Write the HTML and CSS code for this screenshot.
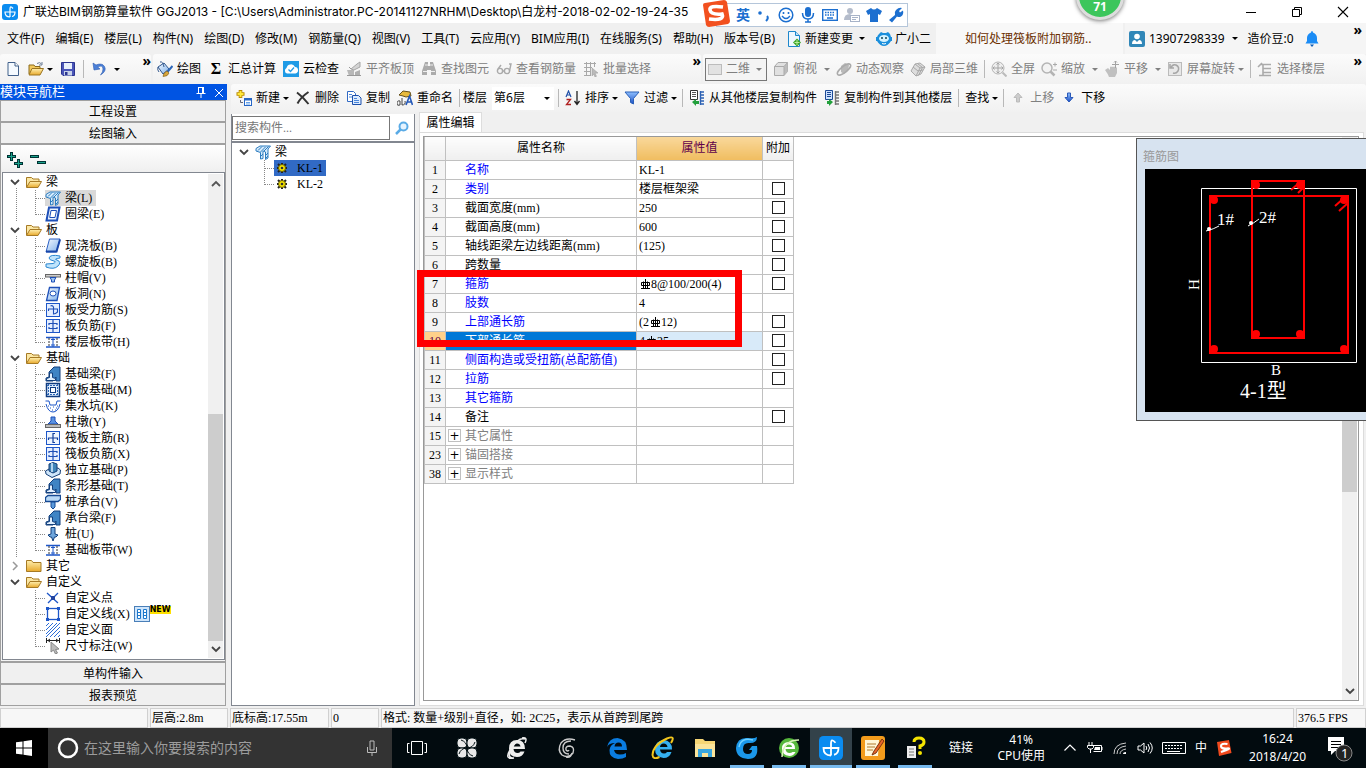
FILE: index.html
```html
<!DOCTYPE html>
<html lang="zh-CN">
<head>
<meta charset="utf-8">
<title>广联达BIM钢筋算量软件 GGJ2013</title>
<link rel="stylesheet" href="styles.css">
</head>
<body>
<svg class="defs" aria-hidden="true">
  <defs>
    <linearGradient id="gold" x1="0" y1="0" x2="0" y2="1"><stop offset="0" stop-color="#fff0b0"/><stop offset="1" stop-color="#e8a92c"/></linearGradient>
    <linearGradient id="sky" x1="0" y1="0" x2="1" y2="1"><stop offset="0" stop-color="#f4faff"/><stop offset="1" stop-color="#7fb0ea"/></linearGradient>
    <linearGradient id="royal" x1="0" y1="0" x2="0" y2="1"><stop offset="0" stop-color="#8fc0ff"/><stop offset="1" stop-color="#1b4fc4"/></linearGradient>
  </defs>
  <symbol id="logo" viewBox="0 0 16 16"><rect width="16" height="16" rx="3" fill="#0b8cf0"/><path d="M11 4.500Q8 1 8 5v8M8 13Q3 13 3 8h10q0 4-3 4.500" fill="none" stroke="#fff" stroke-width="1.200"/></symbol>
  <symbol id="doc" viewBox="0 0 16 16"><path d="M3 1.500h7l3.500 3.500v9.500H3z" fill="#f5faff" stroke="#41608a"/><path d="M10 1.500V5h3.500" fill="#fff" stroke="#41608a"/></symbol>
  <symbol id="open" viewBox="0 0 16 16"><path d="M1 13V4h5l1 1.500h5V8" fill="#f2c95c" stroke="#8a6a1c"/><path d="M1 14L4 7.500h11.500L12 14z" fill="url(#gold)" stroke="#9b7420"/><path d="M9 2.500q3-2 4.500.5M14 1v3h-3" fill="none" stroke="#6a7d95"/></symbol>
  <symbol id="fopen" viewBox="0 0 16 16"><path d="M.5 13V3.500h5L7 5h6v3" fill="#fbe7a4" stroke="#a67a25"/><path d="M.5 13.500L4 7.500h11.500L12 13.500z" fill="url(#gold)" stroke="#a67a25"/></symbol>
  <symbol id="save" viewBox="0 0 16 16"><path d="M1.500 1.500h13v13H3L1.500 13z" fill="#4a55b8" stroke="#2b3490"/><rect x="4" y="2" width="8" height="6" fill="#e8f0fb"/><rect x="4" y="10" width="8" height="4.500" fill="#c7d2e8"/><rect x="5" y="11" width="2.500" height="3" fill="#2b3490"/></symbol>
  <symbol id="undo" viewBox="0 0 16 16"><path d="M2 2l1 7 6-1-2.300-2q5-2.500 5.300 2 .2 3-2.500 6Q16 10 13.500 5.500 11 1.500 5 4z" fill="#4b80d8" stroke="#2b5bb0" stroke-width=".6"/></symbol>
  <symbol id="paint" viewBox="0 0 16 16"><path d="M1 6l6-4 5 6-6 5z" fill="url(#sky)" stroke="#31568c"/><path d="M3 1q3-1 4 5" fill="none" stroke="#31568c"/><path d="M1 6q-1 3 1 5" stroke="#31568c" fill="none"/><path d="M15.500 5l-6 7" stroke="#2c66b8" stroke-width="2"/><path d="M10 10q-4 2-4 5.500 5 0 6-3.500z" fill="#d8a63c" stroke="#7a5a18" stroke-width=".6"/></symbol>
  <symbol id="cloud" viewBox="0 0 16 16"><rect width="16" height="16" fill="#1f9be6"/><path d="M4 12.500a3 3 0 01-.5-5.500A4.500 4.500 0 0112 6a3.300 3.300 0 01.5 6.500z" fill="#fff"/><path d="M5.500 8.500l2 2 3.500-4" fill="none" stroke="#1f9be6" stroke-width="1.300"/></symbol>
  <symbol id="slab" viewBox="0 0 16 16"><path d="M1 9h7v6H3z" fill="#b8b8b8"/><path d="M5 8l6-5 3-2v5L8 9z" fill="#d4d4d4" stroke="#a6a6a6"/><path d="M9 15v-4l5-2v6z" fill="#b0b0b0"/><path d="M1 14.500h14M3 6l2 2" stroke="#999"/></symbol>
  <symbol id="bino" viewBox="0 0 16 16"><path d="M4 1h3v4h2V1h3l3 9v4h-5v-5H6v5H1v-4z" fill="#ababab"/><path d="M2 10.500h4M10 10.500h4M4 4h3M9 4h3" stroke="#eee"/></symbol>
  <symbol id="glasses" viewBox="0 0 16 16"><g fill="none" stroke="#aaa" stroke-width="1.400"><circle cx="4" cy="10" r="2.600"/><circle cx="11" cy="10" r="2.600"/><path d="M6.500 10h2M2 8l3-4M13.500 10l1.500-7-2 0"/></g></symbol>
  <symbol id="batch" viewBox="0 0 16 16"><path d="M1 2.500h12M1 6.500h8M1 10.500h6M1 14.500h6M3.500 1v14M7.500 1v14M11.500 1v5" stroke="#a8a8a8" fill="none"/><path d="M9 7l6 5-3 .3 1.500 3-1.500.7-1.400-3L9 15z" fill="#bbb" stroke="#999" stroke-width=".5"/></symbol>
  <symbol id="plane" viewBox="0 0 16 16"><rect x="1.500" y="3.500" width="13" height="10" fill="#e2e2e2" stroke="#bcbcbc"/></symbol>
  <symbol id="cube" viewBox="0 0 16 16"><path d="M1.500 5.500L5 1.500h9.500v9L11 14.500H1.500z" fill="#e0e0e0" stroke="#aaa"/><path d="M11 5.500l3.500-4v9L11 14.500z" fill="#bcbcbc"/><path d="M1.500 5.500H11v9M11 5.500l3.500-4" fill="none" stroke="#aaa"/></symbol>
  <symbol id="orbit" viewBox="0 0 16 16"><path d="M5 11V5l4-3 4 2-1 6-4 3z" fill="#b9b9b9"/><ellipse cx="8" cy="8.500" rx="8" ry="3" fill="none" stroke="#aaa" stroke-width="1.500" transform="rotate(-38 8 8.500)"/></symbol>
  <symbol id="local" viewBox="0 0 16 16"><path d="M1 10l4-7 5-1 5 4-4 7-5 2z" fill="#ddd" stroke="#aaa"/><path d="M5 3l5 4 5-1M10 7l-4 8M3 6l5 4 5-1M7.500 2.500l5 4-4 8" fill="none" stroke="#a8a8a8"/></symbol>
  <symbol id="full" viewBox="0 0 16 16"><circle cx="7" cy="7" r="6" fill="#eee" stroke="#b4b4b4"/><path d="M7 2v10M2 7h10M5.500 3.500L7 2l1.500 1.500M5.500 10.500L7 12l1.500-1.500M3.500 5.500L2 7l1.500 1.500M10.500 5.500L12 7l-1.500 1.500" fill="none" stroke="#a4a4a4"/><path d="M11.500 11.500l4 4" stroke="#bbb" stroke-width="2"/></symbol>
  <symbol id="zoomer" viewBox="0 0 16 16"><circle cx="6" cy="7" r="5" fill="#f3f3f3" stroke="#b4b4b4" stroke-width="1.500"/><path d="M9.500 10.500l4 4" stroke="#b4b4b4" stroke-width="2.500"/><path d="M12 3.500h4M14 1.500v4M12 9h4" stroke="#aaa"/></symbol>
  <symbol id="pan" viewBox="0 0 16 16"><path d="M1 9l3-2 2 2V6q1-1 2 0 1-1 2 0 1-1 2 0l1 1v5l-2 4H5q-1-3-4-7z" fill="#c0c0c0"/><path d="M11.500 0v7M8 3.500h7M10 1.500L11.500 0 13 1.500" stroke="#a2a2a2" fill="none"/></symbol>
  <symbol id="spin" viewBox="0 0 16 16"><rect x="1.500" y="1.500" width="13" height="13" fill="#e8e8e8" stroke="#bbb"/><path d="M4 7q1-4 5-3 4 2 2 6-2 3-5 2M3 3v4h4" fill="none" stroke="#a5a5a5" stroke-width="1.500"/></symbol>
  <symbol id="floors" viewBox="0 0 16 16"><path d="M4 3.500h10M6 7.500h8M6 11.500h8M2 14.500h12M1 6l4-4M6 4v10" fill="none" stroke="#aaa" stroke-width="1.600"/></symbol>
  <symbol id="newc" viewBox="0 0 16 16"><path d="M4.500 0v8M.5 4h8" stroke="#b98a00" stroke-width="3.600"/><path d="M4.500 1v6M1.500 4h6" stroke="#ffe83a" stroke-width="2"/><rect x="8.500" y="8.500" width="7" height="7" fill="#fff" stroke="#2666c6"/><path d="M8 9.500h8" stroke="#2666c6" stroke-width="2"/><path d="M10 12.500h4M10 14h4" stroke="#68a2e8"/><path d="M4.500 10v2.500H7" stroke="#667" fill="none"/></symbol>
  <symbol id="del" viewBox="0 0 16 16"><path d="M2 2.500Q8 7 13.500 14M13.500 2Q6 7 2.500 13.500" fill="none" stroke="#333" stroke-width="2"/></symbol>
  <symbol id="copy" viewBox="0 0 16 16"><path d="M1.500 1.500h6l2 2v8h-8z" fill="#fff" stroke="#316ac5"/><path d="M6.500 5.500h6l2.500 2.500v6.500H6.500z" fill="#dcebff" stroke="#1c4faa"/><path d="M3 4.500h3M3 7h3M8 8.500h3M8 10.500h5M8 12.500h5" stroke="#4a86da"/></symbol>
  <symbol id="ren" viewBox="0 0 16 16"><path d="M2 5l4-4 7 1 1 4-5 1-3-1z" fill="#e6b93c" stroke="#65501c"/><path d="M0 14q0-4 3-3v4q-3 1-3-1zM5 8v7q4 0 3-4" fill="none" stroke="#444"/><path d="M9 15l3.500-9 3 9M10 12h5" fill="none" stroke="#2458b8" stroke-width="1.600"/></symbol>
  <symbol id="sort" viewBox="0 0 16 16"><path d="M1 7l2.500-6L6 7M2 5h3" fill="none" stroke="#2050a8" stroke-width="1.200"/><path d="M1.500 9.500h4l-4 5H6" fill="none" stroke="#b02020" stroke-width="1.300"/><path d="M12 1v13M9.500 11l2.500 3.500 2.500-3.500" fill="none" stroke="#222" stroke-width="1.300"/></symbol>
  <symbol id="filter" viewBox="0 0 16 16"><path d="M1 2h14L9.500 8.500V14l-3-1.500V8.500z" fill="url(#royal)" stroke="#2a60b8"/></symbol>
  <symbol id="from" viewBox="0 0 16 16"><path d="M1.500.5h7v9h-7z" fill="#fff" stroke="#333"/><path d="M3 2.500h4M3 4.500h4M3 6.500h4" stroke="#555"/><path d="M11.500 1v14M11 2h4M11 5h4M11 8h4M11 11h4M11 14h4" stroke="#2d62b4" stroke-width="1.400"/><path d="M3 12l4-3v2h3v3H7v2z" fill="#23a03c"/></symbol>
  <symbol id="to" viewBox="0 0 16 16"><path d="M1.500.5h7v9h-7z" fill="#cfe2ff" stroke="#1d4a96"/><path d="M3 2.500h4M3 4.500h4M3 6.500h4" stroke="#1d4a96"/><path d="M11.500 1v14M11 2h4M11 5h4M11 8h4M11 11h4M11 14h4" stroke="#777" stroke-width="1.400"/><path d="M9 12l-4-3v2H3v3h2v2z" fill="#23a03c"/></symbol>
  <symbol id="up" viewBox="0 0 16 16"><path d="M8 3l4 4.500H9.500V12h-3V7.500H4z" fill="#ccc" stroke="#bbb"/></symbol>
  <symbol id="down" viewBox="0 0 16 16"><path d="M8 12l4-4.500H9.500V3h-3v4.500H4z" fill="url(#royal)" stroke="#2a58b8"/></symbol>
  <symbol id="change" viewBox="0 0 16 16"><path d="M2.500.5h7l4 4v11h-11z" fill="#eef8ff" stroke="#1d87cc"/><path d="M9.500.5v4h4" fill="#bfe2f8" stroke="#1d87cc"/><path d="M11 7.500l4 4-4 4-4-4z" fill="#3aa326"/><path d="M11 9v5M8.500 11.500h5" stroke="#b8f09a"/></symbol>
  <symbol id="mascot" viewBox="0 0 16 16"><path d="M3 3l2-2 2 1h3l2-1 2 2q2 4 1 7-3 5-7 5T1 10Q0 6 3 3zM0 6h2v4H0zM14 6h2v4h-2z" fill="#1b8fdc"/><ellipse cx="8" cy="7.500" rx="5" ry="3.500" fill="#d4f2ff"/><circle cx="6" cy="7" r="1" fill="#145"/><circle cx="10" cy="7" r="1" fill="#145"/><path d="M6 12.500q2 1 4 0" stroke="#fff" fill="none"/></symbol>
  <symbol id="user" viewBox="0 0 16 16"><rect width="16" height="16" rx="2" fill="#3187b8"/><circle cx="8" cy="5.500" r="2.800" fill="#fff"/><path d="M3 13q0-4 3-4l2 2 2-2q3 0 3 4z" fill="#fff"/></symbol>
  <symbol id="bell" viewBox="0 0 16 16"><path d="M8 0q1 0 1 1.500Q13 3 13 7v3l1.500 2.500h-13L3 10V7q0-4 4-5.500Q7 0 8 0z" fill="#1b8cf5"/><path d="M6 13.500h4L8 16z" fill="#0b5cb8"/></symbol>
  <symbol id="folder" viewBox="0 0 16 16"><path d="M.5 13.500v-11h5l1.500 2h8v9z" fill="url(#gold)" stroke="#a67a25"/></symbol>
  <symbol id="chev-d" viewBox="0 0 10 10"><path d="M1 3l4 4 4-4" fill="none" stroke="#444" stroke-width="1.800"/></symbol>
  <symbol id="chev-r" viewBox="0 0 10 10"><path d="M3 1l4 4-4 4" fill="none" stroke="#999" stroke-width="1.500"/></symbol>
  <symbol id="chev-u" viewBox="0 0 10 10"><path d="M1 7l4-4 4 4" fill="none" stroke="#555" stroke-width="1.800"/></symbol>
  <symbol id="beam" viewBox="0 0 16 16"><path d="M1 4.500L5 2h10.500L13 5v9l-2.500 1.500V8L8 7v7.500L5.500 15V8.500L1 7z" fill="#d7ecfc" stroke="#2d7cc0"/><path d="M3 6.500l4-4M5.500 8l5-5M9 7l4.500-4.500M6 12l2-2M11 11l2-2M11 14l2-2" stroke="#2d7cc0"/></symbol>
  <symbol id="ring" viewBox="0 0 16 16"><path d="M4 1.500h10.500L12 14.500H1.500z" fill="#eaf3ff" stroke="#1d4fb8" stroke-width="2"/><path d="M6 4.500h5.500L10 11.500H4.700z" fill="#fff" stroke="#1d4fb8"/></symbol>
  <symbol id="slabb" viewBox="0 0 16 16"><path d="M4.500 1h10.500L11.500 14H1z" fill="url(#sky)" stroke="#2a5fc4"/><path d="M1 13.500h10.500L15 1.500" fill="none" stroke="#1846a8" stroke-width="2"/></symbol>
  <symbol id="spiral" viewBox="0 0 16 16"><path d="M15 2Q5 0 4 4q0 2 5 3 3 1-1 2.500L1 10v3q8 3 12-1 4-4-1-6-4-1 3-2z" fill="#bfe4fc" stroke="#2a86d0"/></symbol>
  <symbol id="cap" viewBox="0 0 16 16"><rect x=".5" y="4.500" width="15" height="2.500" fill="#ccc" stroke="#666"/><path d="M5 7.500h6L9.500 10v2h-3v-2z" fill="#9cc4f0" stroke="#1d4fb8"/></symbol>
  <symbol id="hole" viewBox="0 0 16 16"><path d="M4.500 1.500h10L12 14.500H1.500z" fill="url(#sky)" stroke="#1d4fb8" stroke-width="1.300"/><ellipse cx="8" cy="7.500" rx="3" ry="2.500" fill="#fff" stroke="#1d4fb8"/></symbol>
  <symbol id="force" viewBox="0 0 16 16"><rect x="1.500" y="1.500" width="13" height="13" fill="#e4eeff" stroke="#1d56c8"/><path d="M3.500 9V7h9v3q-2 2-4 2V5q-1-2-3-1" fill="none" stroke="#1d4fb8" stroke-width="1.100"/></symbol>
  <symbol id="neg" viewBox="0 0 16 16"><rect x="1.500" y="1.500" width="13" height="13" fill="#e4eeff" stroke="#1d56c8"/><path d="M8 2v12M4 5.500h8M4 10.500h8M4 5v2M12 5v2M4 9v2M12 9v2" stroke="#1d4fb8" stroke-width="1.200"/></symbol>
  <symbol id="band" viewBox="0 0 16 16"><path d="M1 3.500h14M1 13h14" stroke="#1d56c8" stroke-width="1.600"/><path d="M8 3v10M6 5.500h4M6 11h4" stroke="#1d56c8"/><path d="M4 4v8M12 4v8" stroke="#333" stroke-dasharray="2 1"/></symbol>
  <symbol id="fbeam" viewBox="0 0 16 16"><path d="M1 15v-3l3-1V6l5-5h6v14h-4v-4L8 15z" fill="#3f84c4" stroke="#123f7c"/><path d="M1.500 14.500v-2l3-1V7h3v4.500l3 1v2z" fill="#e2f0ff" stroke="#123f7c"/></symbol>
  <symbol id="raft" viewBox="0 0 16 16"><rect x="1.500" y="1.500" width="13" height="13" fill="#e2efff" stroke="#103c80" stroke-width="1.500"/><rect x="5.500" y="5.500" width="5" height="5" fill="#fff" stroke="#103c80"/><path d="M3.500 2v12M12.500 2v12M2 3.500h12M2 12.500h12" stroke="#2a65b4" stroke-dasharray="2 1"/></symbol>
  <symbol id="pit" viewBox="0 0 16 16"><path d="M.5 3H4l1 4h6l1-4h3.500M1 6q2 8 7 8t7-8" fill="none" stroke="#1d56c8"/><path d="M3 8h1M5 10h1M8 9h1M11 10h1M7 12h1M10 12h1M12 8h1" stroke="#1d56c8"/></symbol>
  <symbol id="pier" viewBox="0 0 16 16"><path d="M6 3h4v4l3 3H3l3-3z" fill="#5a92e0" stroke="#1d4fb8"/><rect x=".5" y="10.500" width="15" height="3" fill="#bbb" stroke="#666"/></symbol>
  <symbol id="mainbar" viewBox="0 0 16 16"><rect x="1.500" y="1.500" width="13" height="13" fill="#eef5ff" stroke="#1d56c8"/><path d="M3.500 10V8h9v2M10 3.500H8v9h2" stroke="#123f9c" stroke-width="1.200" fill="none"/></symbol>
  <symbol id="found" viewBox="0 0 16 16"><path d="M.5 9L4 7l9-1 2.500 2-.5 4-8 3.500L1 12z" fill="#cfe6fa" stroke="#143f78"/><path d="M4 2l4-1.500 4 1.500v7l-4 2-4-2z" fill="#3f84b8" stroke="#143f78"/><path d="M7 1v9" stroke="#d8edff" stroke-width="1.500"/></symbol>
  <symbol id="pilecap" viewBox="0 0 16 16"><path d="M.5 3.500L3 1.500h12.500v4L13 7.500H.5z" fill="#b9d9f6" stroke="#164a94" stroke-width="1.300"/><path d="M6 8h4v5l-2 2-2-2z" fill="#5c9bdc" stroke="#164a94"/></symbol>
  <symbol id="pile" viewBox="0 0 16 16"><path d="M6 1.500h4V8l3 1-2 2H9.500L8 15l-1.500-4H5L3 9l3-1z" fill="#6ea5dc" stroke="#123f7c"/></symbol>
  <symbol id="pt" viewBox="0 0 16 16"><path d="M2 3l11 10M13 3L3 13" stroke="#1d56c8" stroke-width="1.300"/><rect x="6" y="6" width="4" height="4" fill="#2244a0"/></symbol>
  <symbol id="line" viewBox="0 0 16 16"><rect x="2.500" y="2.500" width="11" height="11" fill="#fff" stroke="#1d56c8" stroke-width="1.300"/><path d="M1 1h3v3H1zM12 1h3v3h-3zM1 12h3v3H1zM12 12h3v3h-3z" fill="#1d56c8"/></symbol>
  <symbol id="area" viewBox="0 0 16 16"><path d="M1 4l3-3M1 8l7-7M1 12L12 1M1 15L15 1M5 15L15 5M9 15l6-6M13 15l2-2" stroke="#2a6cd8"/></symbol>
  <symbol id="dim" viewBox="0 0 16 16"><path d="M1.500 0v5M14.500 0v5M2 2.500h12M5 1L3 2.500 5 4M11 1l2 1.500L11 4" stroke="#222" fill="none"/><path d="M6 4l8 7-3.500.5 2 3.500-2 1-2-4L6 14z" fill="#bbb" stroke="#888"/></symbol>
  <symbol id="grid" viewBox="0 0 16 16"><rect x=".5" y=".5" width="15" height="15" fill="#cfe5fb" stroke="#4a7fb8"/><path d="M3.500 3.500h3v9h-3zM9.500 3.500h3v9h-3zM3.500 6.500h3M3.500 9.500h3M9.500 6.500h3M9.500 9.500h3" fill="#fff" stroke="#1d78cc"/></symbol>
  <symbol id="gear" viewBox="0 0 16 16"><path d="M8 3v10M3 8h10M4 4l8 8M12 4l-8 8" stroke="#222" stroke-width="2"/><circle cx="8" cy="8" r="3.500" fill="#f5e400" stroke="#665c00"/><circle cx="8" cy="8" r="1.300" fill="#333"/></symbol>
  <symbol id="rebar" viewBox="0 0 12 12"><path d="M6.500 1v9.500M4.500 3.500v7M8.500 3.500v7M2.500 4.500h8v3h-8zM2 10.500h9" fill="none" stroke="#000"/></symbol>
</svg>

<header class="titlebar">
  <svg class="ic"><use href="#logo"/></svg>
  <h1>广联达BIM钢筋算量软件 GGJ2013 - [C:\Users\Administrator.PC-20141127NRHM\Desktop\白龙村-2018-02-02-19-24-35</h1>
  <div class="winbtns">
    <button aria-label="最小化"><svg class="ic" viewBox="0 0 16 16"><path d="M3 8.500h10" stroke="#000"/></svg></button>
    <button aria-label="还原"><svg class="ic" viewBox="0 0 16 16"><path d="M3.500 5.500h7v7h-7zM5.500 5.500v-2h7v7h-2" fill="none" stroke="#000"/></svg></button>
    <button aria-label="关闭"><svg class="ic" viewBox="0 0 16 16"><path d="M3 3l10 10M13 3L3 13" stroke="#000" stroke-width="1.100"/></svg></button>
  </div>
</header>

<nav class="menubar">
  <div class="menus">
    <button>文件(F)</button><button>编辑(E)</button><button>楼层(L)</button><button>构件(N)</button><button>绘图(D)</button><button>修改(M)</button><button>钢筋量(Q)</button><button>视图(V)</button><button>工具(T)</button><button>云应用(Y)</button><button>BIM应用(I)</button><button>在线服务(S)</button><button>帮助(H)</button><button>版本号(B)</button>
    <button class="tb"><svg class="ic"><use href="#change"/></svg>新建变更<i class="caret far"></i></button>
    <button class="tb"><svg class="ic"><use href="#mascot"/></svg>广小二</button>
  </div>
  <a class="tip" href="#help">如何处理筏板附加钢筋..</a>
  <div class="account">
    <button class="tb"><svg class="ic"><use href="#user"/></svg>13907298339<i class="caret far"></i></button>
    <span>造价豆:0</span>
    <button aria-label="通知"><svg class="ic"><use href="#bell"/></svg></button>
    <button class="more" aria-label="更多">»</button>
  </div>
</nav>

<div class="toolrow">
  <div class="group files">
    <button aria-label="新建"><svg class="ic"><use href="#doc"/></svg></button>
    <button class="tb" aria-label="打开"><svg class="ic"><use href="#open"/></svg><i class="caret"></i></button>
    <button aria-label="保存"><svg class="ic"><use href="#save"/></svg></button>
    <i class="sep"></i>
    <button class="tb" aria-label="撤销"><svg class="ic"><use href="#undo"/></svg><i class="caret far"></i></button>
    <button class="more" aria-label="更多">»</button>
  </div>
  <div class="group draw">
    <button class="tb"><svg class="ic"><use href="#paint"/></svg>绘图</button>
    <button class="tb"><b class="sigma">Σ</b>汇总计算</button>
    <button class="tb"><svg class="ic"><use href="#cloud"/></svg>云检查</button>
    <button class="tb off"><svg class="ic"><use href="#slab"/></svg>平齐板顶</button>
    <button class="tb off"><svg class="ic"><use href="#bino"/></svg>查找图元</button>
    <button class="tb off"><svg class="ic"><use href="#glasses"/></svg>查看钢筋量</button>
    <button class="tb off"><svg class="ic"><use href="#batch"/></svg>批量选择</button>
    <button class="more" aria-label="更多">»</button>
  </div>
  <div class="group view">
    <label class="combo off"><svg class="ic"><use href="#plane"/></svg><select aria-label="视图"><option>二维</option></select><i class="caret"></i></label>
    <button class="tb off"><svg class="ic"><use href="#cube"/></svg>俯视<i class="caret far"></i></button>
    <button class="tb off"><svg class="ic"><use href="#orbit"/></svg>动态观察</button>
    <button class="tb off"><svg class="ic"><use href="#local"/></svg>局部三维</button>
    <i class="sep"></i>
    <button class="tb off"><svg class="ic"><use href="#full"/></svg>全屏</button>
    <button class="tb off"><svg class="ic"><use href="#zoomer"/></svg>缩放<i class="caret far"></i></button>
    <button class="tb off"><svg class="ic"><use href="#pan"/></svg>平移<i class="caret far"></i></button>
    <button class="tb off"><svg class="ic"><use href="#spin"/></svg>屏幕旋转<i class="caret"></i></button>
    <i class="sep"></i>
    <button class="tb off"><svg class="ic"><use href="#floors"/></svg>选择楼层</button>
    <button class="more" aria-label="更多">»</button>
  </div>
</div>

<div class="workspace">
  <aside class="module song">
    <div class="caption"><span>模块导航栏</span>
      <button aria-label="固定"><svg class="ic" viewBox="0 0 16 16"><path d="M5.500 3v6M10.500 3v6M5 3.500h6M3.500 9.500h9M8 10v4M9.500 3v6" stroke="#fff" fill="none"/></svg></button>
      <button aria-label="关闭"><svg class="ic" viewBox="0 0 16 16"><path d="M4 5l8 8M12 5l-8 8" stroke="#fff"/></svg></button>
    </div>
    <button class="section">工程设置</button>
    <button class="section">绘图输入</button>
    <div class="treebox">
      <div class="expand">
        <button aria-label="全部展开"><svg class="ic" viewBox="0 0 16 16"><path d="M4.500 0v9M0 4.500h9M11.500 7v9M7 11.500h9" stroke="#033" stroke-width="3"/><path d="M4.500 1v7M1 4.500h7M11.500 8v7M8 11.500h7" stroke="#19a28c"/></svg></button>
        <button aria-label="全部折叠"><svg class="ic" viewBox="0 0 16 16"><path d="M0 4.500h9M7 10.500h9" stroke="#033" stroke-width="3"/><path d="M1 4.500h7M8 10.500h7" stroke="#19a28c"/></svg></button>
      </div>
      <div class="treepane">
        <ul class="tree">
          <li class="branch"><div class="node"><svg class="tw"><use href="#chev-d"/></svg><svg class="ic"><use href="#fopen"/></svg>梁</div>
            <ul>
              <li class="on"><span><svg class="ic"><use href="#beam"/></svg>梁(L)</span></li>
              <li><span><svg class="ic"><use href="#ring"/></svg>圈梁(E)</span></li>
            </ul></li>
          <li class="branch"><div class="node"><svg class="tw"><use href="#chev-d"/></svg><svg class="ic"><use href="#fopen"/></svg>板</div>
            <ul>
              <li><span><svg class="ic"><use href="#slabb"/></svg>现浇板(B)</span></li>
              <li><span><svg class="ic"><use href="#spiral"/></svg>螺旋板(B)</span></li>
              <li><span><svg class="ic"><use href="#cap"/></svg>柱帽(V)</span></li>
              <li><span><svg class="ic"><use href="#hole"/></svg>板洞(N)</span></li>
              <li><span><svg class="ic"><use href="#force"/></svg>板受力筋(S)</span></li>
              <li><span><svg class="ic"><use href="#neg"/></svg>板负筋(F)</span></li>
              <li><span><svg class="ic"><use href="#band"/></svg>楼层板带(H)</span></li>
            </ul></li>
          <li class="branch"><div class="node"><svg class="tw"><use href="#chev-d"/></svg><svg class="ic"><use href="#fopen"/></svg>基础</div>
            <ul>
              <li><span><svg class="ic"><use href="#fbeam"/></svg>基础梁(F)</span></li>
              <li><span><svg class="ic"><use href="#raft"/></svg>筏板基础(M)</span></li>
              <li><span><svg class="ic"><use href="#pit"/></svg>集水坑(K)</span></li>
              <li><span><svg class="ic"><use href="#pier"/></svg>柱墩(Y)</span></li>
              <li><span><svg class="ic"><use href="#mainbar"/></svg>筏板主筋(R)</span></li>
              <li><span><svg class="ic"><use href="#neg"/></svg>筏板负筋(X)</span></li>
              <li><span><svg class="ic"><use href="#found"/></svg>独立基础(P)</span></li>
              <li><span><svg class="ic"><use href="#fbeam"/></svg>条形基础(T)</span></li>
              <li><span><svg class="ic"><use href="#pilecap"/></svg>桩承台(V)</span></li>
              <li><span><svg class="ic"><use href="#fbeam"/></svg>承台梁(F)</span></li>
              <li><span><svg class="ic"><use href="#pile"/></svg>桩(U)</span></li>
              <li><span><svg class="ic"><use href="#band"/></svg>基础板带(W)</span></li>
            </ul></li>
          <li class="branch"><div class="node"><svg class="tw"><use href="#chev-r"/></svg><svg class="ic"><use href="#folder"/></svg>其它</div></li>
          <li class="branch"><div class="node"><svg class="tw"><use href="#chev-d"/></svg><svg class="ic"><use href="#fopen"/></svg>自定义</div>
            <ul>
              <li><span><svg class="ic"><use href="#pt"/></svg>自定义点</span></li>
              <li><span><svg class="ic"><use href="#line"/></svg>自定义线(X)</span><svg class="ic"><use href="#grid"/></svg><b class="new">NEW</b></li>
              <li><span><svg class="ic"><use href="#area"/></svg>自定义面</span></li>
              <li><span><svg class="ic"><use href="#dim"/></svg>尺寸标注(W)</span></li>
            </ul></li>
        </ul>
        <div class="vbar"><svg class="tw"><use href="#chev-u"/></svg><i class="track"></i><i class="thumb"></i><svg class="tw"><use href="#chev-d"/></svg></div>
      </div>
    </div>
    <button class="section">单构件输入</button>
    <button class="section">报表预览</button>
  </aside>

  <main>
    <div class="group edit">
      <button class="tb"><svg class="ic"><use href="#newc"/></svg>新建<i class="caret"></i></button>
      <button class="tb"><svg class="ic"><use href="#del"/></svg>删除</button>
      <button class="tb"><svg class="ic"><use href="#copy"/></svg>复制</button>
      <button class="tb"><svg class="ic"><use href="#ren"/></svg>重命名</button>
      <i class="sep"></i>
      <label class="floor">楼层<span class="combo plain"><select><option>第6层</option></select><i class="caret"></i></span></label>
      <i class="sep"></i>
      <button class="tb"><svg class="ic"><use href="#sort"/></svg>排序<i class="caret"></i></button>
      <button class="tb"><svg class="ic"><use href="#filter"/></svg>过滤<i class="caret"></i></button>
      <i class="sep"></i>
      <button class="tb"><svg class="ic"><use href="#from"/></svg>从其他楼层复制构件</button>
      <button class="tb"><svg class="ic"><use href="#to"/></svg>复制构件到其他楼层</button>
      <i class="sep"></i>
      <button class="tb">查找<i class="caret"></i></button>
      <i class="sep"></i>
      <button class="tb off"><svg class="ic"><use href="#up"/></svg>上移</button>
      <button class="tb"><svg class="ic"><use href="#down"/></svg>下移</button>
    </div>
    <div class="panels">
      <section class="members song">
        <div class="search"><input type="text" placeholder="搜索构件..." aria-label="搜索构件">
          <button aria-label="搜索"><svg class="ic" viewBox="0 0 16 16"><circle cx="9.500" cy="6.500" r="4" fill="#e4f3ff" stroke="#5aabe6" stroke-width="2"/><path d="M6.500 9.500L2 14" stroke="#5aabe6" stroke-width="2.500"/></svg></button></div>
        <ul class="tree">
          <li><div class="node"><svg class="tw"><use href="#chev-d"/></svg><svg class="ic"><use href="#beam"/></svg>梁</div>
            <ul>
              <li class="hot"><span><svg class="ic"><use href="#gear"/></svg>KL-1</span></li>
              <li><span><svg class="ic"><use href="#gear"/></svg>KL-2</span></li>
            </ul></li>
        </ul>
      </section>
      <section class="props song">
        <div class="tabs"><button>属性编辑</button></div>
        <div class="sheet">
          <div class="scroller">
            <table>
              <colgroup><col class="c-no"><col class="c-name"><col class="c-val"><col class="c-add"></colgroup>
              <thead><tr><th></th><th>属性名称</th><th class="gold">属性值</th><th>附加</th></tr></thead>
              <tbody>
                <tr><th>1</th><td class="blue">名称</td><td>KL-1</td><td></td></tr>
                <tr><th>2</th><td class="blue">类别</td><td>楼层框架梁</td><td><input type="checkbox" aria-label="类别 附加"></td></tr>
                <tr><th>3</th><td>截面宽度(mm)</td><td>250</td><td><input type="checkbox" aria-label="截面宽度 附加"></td></tr>
                <tr><th>4</th><td>截面高度(mm)</td><td>600</td><td><input type="checkbox" aria-label="截面高度 附加"></td></tr>
                <tr><th>5</th><td>轴线距梁左边线距离(mm)</td><td>(125)</td><td><input type="checkbox" aria-label="轴线距离 附加"></td></tr>
                <tr><th>6</th><td>跨数量</td><td></td><td><input type="checkbox" aria-label="跨数量 附加"></td></tr>
                <tr><th>7</th><td class="blue">箍筋</td><td><svg class="rb"><use href="#rebar"/></svg>8@100/200(4)</td><td><input type="checkbox" aria-label="箍筋 附加"></td></tr>
                <tr><th>8</th><td class="blue">肢数</td><td>4</td><td></td></tr>
                <tr><th>9</th><td class="blue">上部通长筋</td><td>(2<svg class="rb"><use href="#rebar"/></svg>12)</td><td><input type="checkbox" aria-label="上部通长筋 附加"></td></tr>
                <tr class="current"><th>10</th><td>下部通长筋</td><td>4<svg class="rb"><use href="#rebar"/></svg>25</td><td><input type="checkbox" aria-label="下部通长筋 附加"></td></tr>
                <tr><th>11</th><td class="blue">侧面构造或受扭筋(总配筋值)</td><td></td><td><input type="checkbox" aria-label="侧面筋 附加"></td></tr>
                <tr><th>12</th><td class="blue">拉筋</td><td></td><td><input type="checkbox" aria-label="拉筋 附加"></td></tr>
                <tr><th>13</th><td class="blue">其它箍筋</td><td></td><td></td></tr>
                <tr><th>14</th><td>备注</td><td></td><td><input type="checkbox" aria-label="备注 附加"></td></tr>
                <tr class="fold"><th>15</th><td><div><button>+</button>其它属性</div></td><td></td><td></td></tr>
                <tr class="fold"><th>23</th><td><div><button>+</button>锚固搭接</div></td><td></td><td></td></tr>
                <tr class="fold"><th>38</th><td><div><button>+</button>显示样式</div></td><td></td><td></td></tr>
              </tbody>
            </table>
            <div class="vbar"><svg class="tw"><use href="#chev-u"/></svg><i class="thumb"></i><i class="track"></i><svg class="tw"><use href="#chev-d"/></svg></div>
          </div>
          <i class="mark"></i>
          <figure class="stirrup">
            <figcaption>箍筋图</figcaption>
            <svg viewBox="0 0 221 243" width="221" height="243">
              <rect width="221" height="243"/>
              <path d="M56.500 19.500h155v174h-155z" fill="none" stroke="#fff"/>
              <g fill="none" stroke="red" stroke-width="2"><path d="M65 27h138v157H65zM107 12h52v157h-52z"/><path d="M190 37l9-8M194 42l9-8M146 21l9-8M153 24l5-5"/></g>
              <g fill="red"><circle cx="69" cy="31" r="4"/><circle cx="199" cy="31" r="4"/><circle cx="69" cy="180" r="4"/><circle cx="199" cy="180" r="4"/><circle cx="111" cy="16" r="4"/><circle cx="155" cy="16" r="4"/><circle cx="111" cy="165" r="4"/><circle cx="155" cy="165" r="4"/></g>
              <path d="M61 62q8-2 13-5M103 57q6-3 11-7" stroke="#fff" fill="none"/><circle cx="64" cy="60" r="2" fill="#fff"/><circle cx="106" cy="54" r="2" fill="#fff"/>
              <g fill="#fff" font-size="17"><text x="72" y="56">1#</text><text x="114" y="54">2#</text><text x="126" y="206" font-size="15">B</text><text transform="translate(54 121) rotate(-90)" font-size="15">H</text><text x="95" y="229" font-size="20">4-1型</text></g>
            </svg>
          </figure>
        </div>
      </section>
    </div>
  </main>
</div>

<footer class="status song">
  <span class="s1"></span><span class="s2">层高:2.8m</span><span class="s3">底标高:17.55m</span><span class="s4">0</span><span class="s5">格式: 数量+级别+直径，如: 2C25，表示从首跨到尾跨</span><span class="s6">376.5 FPS</span>
</footer>

<div class="taskbar">
  <button class="start" aria-label="开始"><svg class="ic" viewBox="0 0 16 16"><path d="M0 2.300L6.500 1.400v6.100H0zM7.500 1.200L16 0v7.500H7.500zM0 8.500h6.500v6.100L0 13.700zM7.500 8.500H16V16l-8.500-1.200z" fill="#fff"/></svg></button>
  <label class="ask"><svg class="big" viewBox="0 0 24 24"><circle cx="12" cy="12" r="9" fill="none" stroke="#fff" stroke-width="2.500"/></svg><input type="text" placeholder="在这里输入你要搜索的内容" aria-label="搜索"><svg class="ic" viewBox="0 0 16 16"><path d="M6 1h4v9H6zM3.500 7v5.500h9V7M8 12.500V16" fill="none" stroke="#bbb"/></svg></label>
  <div class="apps wide">
    <button aria-label="任务视图"><svg class="big" viewBox="0 0 24 24"><path d="M6.500 5.500h11v13h-11zM4.500 7.500h-2v9h2M19.500 7.500h2v9h-2" fill="none" stroke="#fff"/></svg></button>
    <button aria-label="应用"><svg class="big" viewBox="0 0 24 24"><g fill="#e8e8e8" stroke="#021014"><rect x="2" y="2" width="10" height="10" rx="4"/><rect x="12" y="2" width="10" height="10" rx="4"/><rect x="2" y="12" width="10" height="10" rx="4"/><rect x="12" y="12" width="10" height="10" rx="4"/></g><path d="M6 4q6 2 6 8M20 6q-2 6-8 6M18 20q-6-2-6-8M4 18q2-6 8-6" stroke="#021014" fill="none"/></svg></button>
    <button aria-label="浏览器"><svg class="big" viewBox="0 0 24 24"><path d="M20 13H8.500q.5 4 4 4 2 0 3-1.500h4q-2 5.500-7.500 5.500-8 0-8-8.500T12 4q8 0 8 9zm-4.500-2.500Q15 7.500 12 7.500t-3.500 3z" fill="#eee"/><path d="M20 7q3-6-3-5M5 14q-6 10 4 8Q1 23 7 12T20 3" fill="none" stroke="#eee" stroke-width="1.500"/></svg></button>
    <button aria-label="应用"><svg class="big" viewBox="0 0 24 24"><path d="M20 4q-9-3-14 3-4 7 1 12 6 4 11-2 2-6-3-7-5 0-4 4 2 2 3 0M16 5q-8 0-8 7 0 6 6 6M17 17q-1 5-6 4" fill="none" stroke="#ccc" stroke-width="1.400"/></svg></button>
    <button aria-label="Edge"><svg class="big" viewBox="0 0 24 24"><path d="M2 11Q4 2 12.500 2 22 3 22 14H9q1 4.500 6 4.500 3.500 0 6-1.500v4q-3 2-8 2-9-1-8.500-9Q5 9 10 7q-6 0-8 4zm7.500-.5H17Q17 6.500 13.500 6.500T9.500 10.500z" fill="#0a7ce0"/></svg></button>
  </div>
  <div class="apps">
    <button aria-label="IE"><svg class="big" viewBox="0 0 24 24"><path d="M21 13.500H9q.5 4 4 4 2 0 3-1.500h4.500q-2 6-8 6Q4 21 4 13t8.500-9q8.500.5 8.500 9.500zM16.500 11Q16 7.500 12.700 7.500T9 11z" fill="#35b0f0"/><path d="M20 7q5-8-4-4.500Q2 9 1.500 19q.5 5 7 2" fill="none" stroke="#f3c71e" stroke-width="2"/></svg></button>
    <button aria-label="文件资源管理器"><svg class="big" viewBox="0 0 24 24"><path d="M2 3h8l2 2h10v16H2z" fill="#f6d675"/><path d="M2 8h20v13H2z" fill="#fbe49a"/><path d="M5 21v-8h14v8h-4v-4H9v4z" fill="#39a7e0"/></svg></button>
    <button class="run" aria-label="应用"><svg class="big" viewBox="0 0 24 24"><path d="M22 1q0 6-7 6-7-1-7 6 0 5 5 5 4 0 4-4h-3l3-4h5q2 13-9 13Q1 22 1 12 2 1 13 2q6 1 9-1z" fill="#1b98ea"/><path d="M18 4Q6 1 4 11" stroke="#6fd0ff" fill="none" stroke-width="1.500"/></svg></button>
    <button class="run" aria-label="360"><svg class="big" viewBox="0 0 24 24"><circle cx="12" cy="12" r="10" fill="#56b83c"/><path d="M18 13H8.500q.5 4 4 4 2 0 3-1h3q-2 4-6 4Q5 19 5 12.500T12 6q6.500.5 6 7zm-3-2Q15 8.500 12 8.500T8.500 11z" fill="#fff"/><path d="M22 4Q6 4 5 21" stroke="#d9f4b8" fill="none" stroke-width="1.500"/></svg></button>
    <button class="run active" aria-label="广联达"><svg class="big" viewBox="0 0 16 16"><use href="#logo"/></svg></button>
    <button class="run" aria-label="记事"><svg class="big" viewBox="0 0 24 24"><rect width="24" height="24" rx="3" fill="#f39c1c"/><path d="M4 4h14l-1 16H4z" fill="#fff7d8"/><path d="M6 8h9M6 11h8M6 14h6" stroke="#b07a30"/><path d="M21 3l-8 12-2 4 4-2 8-12z" fill="#e7662a" stroke="#7c3410"/></svg></button>
    <button class="run" aria-label="帮助"><svg class="big" viewBox="0 0 24 24"><path d="M4 10h9v12H4z" fill="#eee"/><path d="M6 13h5M6 16h5M6 19h5" stroke="#777"/><path d="M11 6q0-4 5-4t5 4q0 3-4 4v3" fill="none" stroke="#f5e400" stroke-width="3"/><circle cx="17" cy="17" r="2" fill="#f5e400"/></svg></button>
  </div>
  <span class="links">链接</span>
  <span class="meter">41%<br>CPU使用</span>
  <div class="tray">
    <svg class="ic" viewBox="0 0 16 16"><path d="M2.500 10.500L8 5l5.500 5.500" fill="none" stroke="#fff" stroke-width="1.200"/></svg>
    <svg class="ic" viewBox="0 0 16 16"><path d="M4.500 5.500h10v6h-8M15 7v3M2 2v3M5 2v3M.5 5.500h6v2L5 9H2L.5 7.500zM3.500 9v4" fill="none" stroke="#fff"/><path d="M8 7h5v3H7z" fill="#fff"/></svg>
    <svg class="ic" viewBox="0 0 16 16"><path d="M2 14Q2 4 14 3M5 14q0-7 9-8M8 14q0-4 6-5" fill="none" stroke="#ccc"/><path d="M11 14q0-2 3-2v2z" fill="#fff"/></svg>
    <svg class="ic" viewBox="0 0 16 16"><path d="M1 6h2.500L7 3v10L3.500 10H1zM9 6q1.500 2 0 4M11 4q3 4 0 8M13 2.500q4.500 5.500 0 11" fill="none" stroke="#fff"/></svg>
    <svg class="kbd" viewBox="0 0 24 16"><path d="M.5 2.500h23v11H.5z" fill="none" stroke="#fff"/><path d="M3 5.500h18M3 8.500h18" stroke="#fff" stroke-dasharray="2 1"/><path d="M5 11.500h13" stroke="#fff"/></svg>
    <span>中</span>
    <svg class="ic" viewBox="0 0 16 16"><path d="M1 2l12-2 2.500 13L3 16z" fill="#f04a1e"/><path d="M11.500 4Q5 3 5 6t6 2.500-6 3.500" fill="none" stroke="#fff" stroke-width="2.200"/></svg>
  </div>
  <time>16:24<br>2018/4/20</time>
  <button class="note" aria-label="操作中心"><svg viewBox="0 0 32 28" width="32" height="28"><path d="M4 3h16v14h-9l-4 4v-4H4z" fill="#fff"/><path d="M7 7.500h10M7 10.500h10M7 13.500h10" stroke="#000"/><circle cx="20" cy="19" r="8" fill="#222" stroke="#888"/><text x="17" y="24" fill="#fff" font-size="13">1</text></svg></button>
</div>

<div class="ime">
  <svg class="s" viewBox="0 0 28 28"><path d="M1 5q0-2 2-2L22 0q2 0 3 2l3 19q0 2-2 3L7 27q-2 0-3-2z" fill="#f2501f"/><path d="M21 7Q7 5 8 10t12 4q3 7-13 5" fill="none" stroke="#fff" stroke-width="3.600"/></svg>
  <b>英</b>
  <svg class="ic" viewBox="0 0 16 16"><circle cx="4" cy="6" r="1.800" fill="#1c6fd0"/><path d="M11 9q2 2-1 5" stroke="#1c6fd0" stroke-width="2" fill="none"/></svg>
  <svg class="ic" viewBox="0 0 16 16"><circle cx="8" cy="8" r="6.800" fill="none" stroke="#1c6fd0" stroke-width="1.500"/><path d="M4 9q4 5 8 0" fill="none" stroke="#1c6fd0" stroke-width="1.400"/><path d="M5.500 5v2M10.500 5v2" stroke="#1c6fd0" stroke-width="1.600"/></svg>
  <svg class="ic" viewBox="0 0 16 16"><rect x="5" y="0" width="6" height="10" rx="3" fill="#1c6fd0"/><path d="M2.500 6q0 6 5.500 6t5.500-6M8 12v3.500M5 15h6" fill="none" stroke="#1c6fd0" stroke-width="1.500"/></svg>
  <svg class="ic" viewBox="0 0 16 16"><rect x=".7" y="2.700" width="14.600" height="10.600" fill="none" stroke="#1c6fd0" stroke-width="1.400"/><path d="M3 5.500h10M3 8h10" stroke="#1c6fd0" stroke-width="1.500" stroke-dasharray="1.500 1"/><path d="M5 11h6" stroke="#1c6fd0" stroke-width="1.500"/></svg>
  <svg class="ic" viewBox="0 0 16 16"><circle cx="6" cy="4" r="3" fill="#b4bccb"/><path d="M0 13q0-6 6-6l3 2v4z" fill="#b4bccb"/><rect x="6.500" y="8.500" width="9" height="6" fill="#fff" stroke="#a7b3c8"/><path d="M8 10.500h6M8 12.500h4" stroke="#a7b3c8"/></svg>
  <svg class="ic" viewBox="0 0 16 16"><path d="M5 1q3 3 6 0l5 3-2 4-2-1v8H4V7L2 8 0 4z" fill="#1c6fd0"/></svg>
  <svg class="ic" viewBox="0 0 16 16"><path d="M14 1l-3 3 1 1.500 3-2q1 4-2 6-2 1-4 0l-5 6-3-2.500 6-5q-1-3 1-5 3-3 6-2z" fill="#1c6fd0"/></svg>
</div>
<div class="bubble">71</div>
</body>
</html>
```
FILE: styles.css
```css
* { box-sizing: border-box; }
body {
  margin: 0;
  height: 100vh;
  display: flex;
  flex-direction: column;
  overflow: hidden;
  position: relative;
  background: #f0f0f0;
  color: #000;
  font: 12px/16px "Noto Sans", "Noto Sans CJK SC", sans-serif;
}
button, input, select {
  font: inherit;
  color: inherit;
  border: 0;
  padding: 0;
  margin: 0;
  background: none;
  border-radius: 0;
  white-space: nowrap;
}
button { display: flex; align-items: center; justify-content: center; flex: none; }
ul { list-style: none; margin: 0; padding: 0; }
.defs { position: absolute; width: 0; height: 0; }
.song { font-family: "Liberation Serif", "Noto Sans CJK SC", serif; }
.ic { width: 16px; height: 16px; flex: none; display: block; }
.tw { width: 10px; height: 10px; flex: none; }
.big { width: 24px; height: 24px; flex: none; }
.caret { flex: none; border: 3px solid transparent; border-top-color: currentColor; border-bottom: 0; }
.tb { gap: 4px; }
.tb .caret { margin-left: -1px; }
.tb .caret.far { margin: 0 0 0 3px; }
.sep { width: 1px; height: 18px; background: #b8b8b8; flex: none; }
.off { color: #808080; }
.more { margin-left: auto; align-self: flex-start; font: bold 14px/14px "Noto Sans", sans-serif; }

.titlebar { display: flex; align-items: center; height: 23px; padding-left: 2px; gap: 5px; background: #fff; flex: none; }
.titlebar h1 { margin: 0; font: 12px/16px Inter, "Noto Sans CJK SC", sans-serif; white-space: nowrap; }
.winbtns { display: flex; margin-left: auto; }
.winbtns button { width: 46px; height: 20px; }

.menubar { display: flex; height: 31px; flex: none; }
.menus { display: flex; align-items: center; gap: 11px; width: 936px; padding-left: 7px; flex: none; }
.menus .tb { gap: 3px; }
.tip {
  width: 189px; flex: none; display: flex; align-items: center; padding-left: 29px;
  background: #f8f8f8; color: #6b2f00; text-decoration: none; border-right: 2px solid #f0f0f0;
}
.account { display: flex; align-items: center; flex: 1; gap: 10px; padding: 0 4px; background: #f5f5f5; }

.toolrow { display: flex; height: 30px; flex: none; gap: 2px; }
.group { display: flex; align-items: center; gap: 7px; background: linear-gradient(#fbfbfb, #f1f1f1); border-radius: 3px; }
.files { width: 151px; padding-left: 5px; flex: none; }
.draw { width: 548px; padding-left: 4px; flex: none; }
.view { flex: 1; padding: 0 4px 0 2px; gap: 6px; min-width: 0; }
.sigma { width: 16px; font: bold 16px/16px "Liberation Serif", serif; text-align: center; }
.combo { display: flex; align-items: center; border: 1px solid #777; height: 23px; width: 62px; padding: 0 4px 0 1px; background: #f4f4f4; gap: 3px; }
.combo select { appearance: none; flex: 1; min-width: 0; outline: 0; opacity: 1; }
.combo.plain { border: 0; background: #fff; width: 62px; padding-left: 2px; color: #000; }
.floor { display: flex; align-items: center; gap: 5px; margin-left: -3px; margin-right: -2px; }

.workspace { display: flex; flex: 1; min-height: 0; }
.module { width: 227px; flex: none; display: flex; flex-direction: column; padding-bottom: 2px; }
.caption { display: flex; align-items: center; height: 16px; background: #0054e3; color: #fff; font-size: 13px; flex: none; gap: 2px; }
.caption span { margin-right: auto; }
.section { height: 22px; border: 1px solid #a0a0a0; padding-top: 2px; margin: 0 1px 0 0; background: #f0f0f0; }
.treebox { flex: 1; min-height: 0; display: flex; flex-direction: column; border: 1px solid #a0a0a0; margin-right: 1px; background: #f4f4f4; }
.expand { display: flex; align-items: center; height: 27px; padding: 2px 0 0 6px; gap: 7px; background: linear-gradient(#fff, #efefef); flex: none; }
.treepane { flex: 1; min-height: 0; display: flex; border: 1px solid #828790; margin: 0 0 1px 1px; padding: 1px; background: #fff; }
.tree { flex: 1; min-width: 0; white-space: nowrap; line-height: 16px; }
.branch { background: repeating-linear-gradient(#888 0 1px, transparent 1px 2px) 12px 14px / 1px 100% no-repeat; }
.branch:nth-last-child(-n+2) { background: none; }
.node { display: flex; align-items: center; height: 16px; padding-left: 6px; }
.node .tw { margin-right: 6px; }
.node .ic { margin-right: 4px; }
.tree ul { margin-left: 31px; }
.tree ul li {
  display: flex; height: 16px; align-items: center;
  background: repeating-linear-gradient(#888 0 1px, transparent 1px 2px) 0 0 / 1px 16px no-repeat;
}
.tree ul li:last-child { background-size: 1px 8px; }
.tree ul li::before { content: ""; width: 10px; border-top: 1px dotted #888; }
.tree ul li span { display: flex; align-items: center; gap: 4px; padding-right: 4px; }
.tree .on span { background: #d9d9d9; }
.tree .hot span { background: #316ac5; }
.new { background: #ffe000; font: bold 8px/8px "DejaVu Sans", sans-serif; align-self: flex-start; }
.vbar { width: 15px; flex: none; display: flex; flex-direction: column; align-items: center; background: #f0f0f0; padding: 5px 0 4px; gap: 3px; }
.vbar .track { flex: 220; }
.vbar .thumb { flex: 229; width: 15px; background: #cdcdcd; }

main { flex: 1; min-width: 0; display: flex; flex-direction: column; padding-left: 4px; }
.edit { height: 28px; padding-left: 5px; flex: none; }
.edit .sep { margin: 0 -1px; }
.edit .tb .caret { margin-right: -1px; }
.panels { flex: 1; min-height: 0; display: flex; gap: 4px; }
.members { width: 184px; flex: none; margin: 2px 0; display: flex; flex-direction: column; background: #fff; border: 1px solid #828790; border-top: 0; }
.search { display: flex; align-items: center; height: 29px; padding-top: 1px; border-bottom: 2px solid #828790; flex: none; }
.search input { width: 158px; height: 24px; border: 1px solid #777; padding: 0 2px; }
.search ::placeholder { color: #777; opacity: 1; }
.search button { flex: 1; }
.members .tree { padding-top: 1px; }
.members .tree ul li span { gap: 7px; padding-right: 3px; }
.members .node { padding-left: 7px; }
.members .tree ul { margin-left: 32px; }
.props { flex: 1; min-width: 0; display: flex; flex-direction: column; }
.tabs button { height: 20px; width: 63px; background: #fff; border: 1px solid #ddd; border-bottom: 0; }
.sheet { flex: 1; min-height: 0; position: relative; background: #fff; border: 1px solid #dcdcdc; padding: 3px 4px 4px 3px; margin: 0 2px 2px 0; display: flex; }
.scroller { flex: 1; display: flex; justify-content: space-between; align-items: stretch; border: 1px solid #999; padding: 0 1px 0 0; }
.props .vbar .thumb { flex: 345; }
.props .vbar .track { flex: 192; }
table { border-collapse: collapse; table-layout: fixed; width: 369px; align-self: flex-start; }
.c-no { width: 21px; } .c-name { width: 191px; } .c-val { width: 126px; } .c-add { width: 31px; }
th, td { border: 1px solid #c0c0c0; padding: 0 0 0 2px; height: 19px; line-height: 16px; font-weight: normal; text-align: left; white-space: nowrap; }
thead th { height: 23px; background: linear-gradient(#fdfdfd, #efefef); text-align: center; padding: 0; border-top: 0; }
thead .gold { background: linear-gradient(#f9d89b, #f0bd60); color: #60004a; }
tbody th { background: #f4f4f4; text-align: center; padding: 0 1px; }
td:nth-child(2) { padding-left: 19px; }
td:last-child { padding: 0; }
td input { appearance: none; display: block; width: 13px; height: 13px; border: 1px solid #222; background: #fff; margin: 0 auto; }
.blue { color: #00f; }
.rb { width: 12px; height: 12px; vertical-align: -2px; }
.current th { background: #ffd18a; color: #60004a; }
.current td:nth-child(2) { background: #0078d7; color: #fff; }
.current td:nth-child(3) { background: #d8eaf9; }
.fold td { color: #808080; }
.fold td:nth-child(2) { padding-left: 2px; }
.fold div { display: flex; align-items: center; gap: 4px; }
.fold button { width: 13px; height: 13px; border: 1px solid #c0c0c0; color: #000; font: 12px/10px "DejaVu Sans", sans-serif; }
.mark { position: absolute; left: -3px; top: 137px; width: 325px; height: 77px; border: 7px solid red; }
.stirrup { position: absolute; right: -3px; top: 5px; width: 230px; margin: 0; padding: 0 0 8px 8px; border: 1px solid #555; border-right: 0; background: #d7e3f0; overflow: hidden; }
.stirrup figcaption { height: 30px; line-height: 36px; color: #999; margin-left: -2px; }
.stirrup svg { display: block; }

.status { display: flex; height: 20px; flex: none; gap: 2px; }
.status span { border: 1px solid #d0d0d0; background: #f7f7f7; padding: 1px; white-space: nowrap; }
.s1 { width: 148px; } .s2 { width: 78px; } .s3 { width: 99px; } .s4 { width: 48px; } .s5 { flex: 1; } .s6 { width: 70px; }

.taskbar { display: flex; align-items: center; height: 40px; flex: none; background: #020b0f; color: #fff; white-space: nowrap; }
.start { width: 48px; height: 40px; background: #000; }
.ask { width: 344px; height: 40px; display: flex; align-items: center; gap: 4px; padding: 0 12px 0 8px; background: #333; }
.ask input { flex: 1; min-width: 0; font-size: 14px; }
.ask input::placeholder { color: #9c9c9c; opacity: 1; }
.apps { display: flex; flex: none; }
.apps button { width: 42px; height: 40px; border: solid transparent; border-width: 3px 0; }
.apps.wide button { width: 50px; }
.apps .run { border-bottom-color: #76b9ed; background-clip: padding-box; margin: 0 4px; width: 34px; }
.apps .active { background: #33424a; background-clip: border-box; margin: 0; width: 42px; border-top-color: #33424a; }
.links { margin-left: 13px; }
.meter { margin-left: auto; text-align: center; }
.tray { display: flex; align-items: center; gap: 9px; margin: 0 17px; }
.kbd { width: 24px; height: 16px; }
time { text-align: center; line-height: 18px; }
.note { margin: 0 10px 0 18px; }

.ime { position: absolute; left: 702px; top: 0; display: flex; align-items: center; gap: 6px; width: 206px; height: 27px; padding-right: 4px; isolation: isolate; }
.ime::before { content: ""; position: absolute; left: 14px; right: 0; top: 3px; bottom: 0; border: 1px solid #b5c6da; background: #fff; z-index: -1; }
.ime .s { width: 28px; height: 28px; flex: none; }
.ime b { color: #1c6fd0; font-size: 14px; }
.ime .ic, .ime b { margin-top: 3px; }
.bubble {
  position: absolute; left: 1076px; top: -28px; width: 48px; height: 48px; border-radius: 50%;
  border: 3px solid #ddd; background: #3cc65c; box-shadow: 0 1px 4px #777;
  color: #fff; font-weight: bold; text-align: center; line-height: 64px;
}
```
